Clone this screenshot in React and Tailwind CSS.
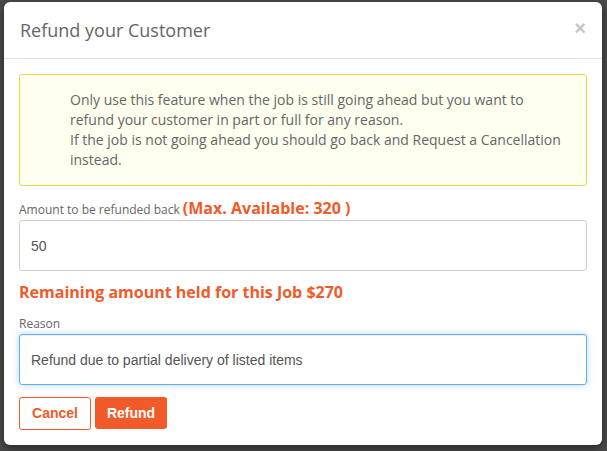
import { useState } from 'react';

const orange = 'text-[#f15a29]';

export default function App() {
  const [amount, setAmount] = useState('50');
  const [reason, setReason] = useState('Refund due to partial delivery of listed items');

  return (
    <div className="w-[607px] h-[451px] bg-[#4a4a4a] overflow-hidden pt-[2px] pl-[4px] pr-[5px] font-['Open_Sans',sans-serif]">
      {/* modal */}
      <div className="w-[598px] h-[443px] bg-white rounded-[6px] shadow-[0_3px_9px_rgba(0,0,0,0.5)]">
        {/* header */}
        <div className="h-[57px] border-b border-[#e5e5e5] flex items-center justify-between pl-[16px] pr-[16px]">
          <h4 className="text-[18px] text-[#666] pt-[1px]">Refund your Customer</h4>
          <span className="text-[#c6c6c6] text-[20px] font-bold font-['Liberation_Sans',sans-serif] leading-none -mt-[5px]">×</span>
        </div>

        {/* body */}
        <div className="px-[15px] pt-[15px]">
          <div className="h-[112px] border border-[#f0d54a] bg-[#fffff0] rounded-[3px] pl-[50px] pt-[15px] text-[14px] leading-[20px] text-[#666]">
            <p>
              Only use this feature when the job is still going ahead but you want to
              <br />
              refund your customer in part or full for any reason.
              <br />
              If the job is not going ahead you should go back and Request a Cancellation
              <br />
              instead.
            </p>
          </div>

          <div className="mt-[12px] h-[20px] flex items-baseline gap-[3px] leading-[20px]">
            <span className="text-[12px] text-[#666]">Amount to be refunded back</span>
            <span className={`text-[16px] font-bold ${orange}`}>(Max. Available: 320 )</span>
          </div>
          <input
            value={amount}
            onChange={e => setAmount(e.target.value)}
            className="mt-[2px] w-full h-[51px] border border-[#cfcfcf] rounded-[3px] px-[11px] text-[14px] text-[#555] font-['Liberation_Sans',sans-serif] outline-none"
          />

          <p className={`mt-[9px] text-[16px] leading-[24px] font-bold ${orange}`}>Remaining amount held for this Job $270</p>

          <label className="block mt-[11px] text-[12px] leading-[18px] text-[#666]">Reason</label>
          <input
            value={reason}
            onChange={e => setReason(e.target.value)}
            className="mt-[1px] w-full h-[51px] border border-[#66afe9] rounded-[3px] px-[11px] text-[14px] text-[#555] font-['Liberation_Sans',sans-serif] outline-none shadow-[inset_0_1px_1px_rgba(0,0,0,0.075),0_0_6px_rgba(102,175,233,0.5)]"
          />

          <div className="mt-[12px] flex gap-[4px] font-['Liberation_Sans',sans-serif]">
            <button className={`w-[72px] h-[33px] border border-[#f15a29] rounded-[3px] bg-white text-[14px] font-bold ${orange}`}>Cancel</button>
            <button className="w-[72px] h-[32px] rounded-[3px] bg-[#f15a29] text-white text-[14px] font-bold">Refund</button>
          </div>
        </div>
      </div>
    </div>
  );
}
